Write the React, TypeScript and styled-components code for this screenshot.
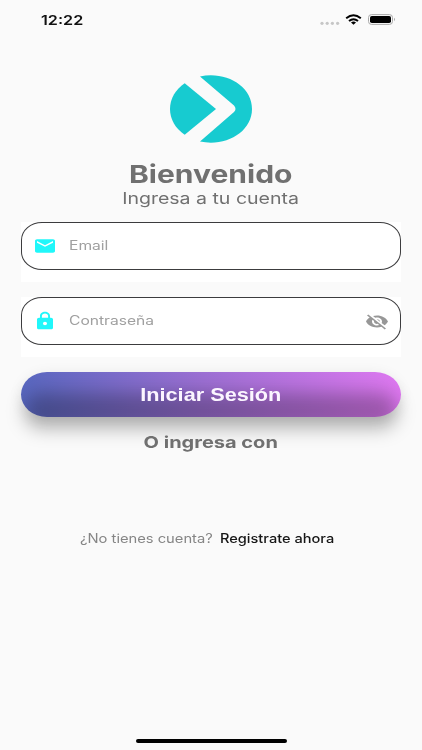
import React from "react";
import styled, { createGlobalStyle } from "styled-components";

const GlobalStyle = createGlobalStyle`
  * { box-sizing: border-box; }
  body { margin: 0; background: #fafafa; font-family: Inter, "Liberation Sans", sans-serif; }
`;

const Screen = styled.main`
  width: 422px;
  height: 750px;
  display: flex;
  flex-direction: column;
  align-items: center;
  overflow: hidden;
  background: #fafafa;
`;

const StatusBar = styled.header`
  width: 100%;
  height: 40px;
  padding: 0 26px 0 41px;
  display: flex;
  align-items: center;
  justify-content: space-between;
`;

const StatusIcons = styled.div`
  display: flex;
  align-items: center;
`;

/* Wide lettering: a normal face stretched sideways. */
const Wide = styled.span<{ $size: number; $weight?: number; $color: string; $stretch: number; $origin?: string }>`
  display: block;
  white-space: nowrap;
  font-size: ${(p) => p.$size}px;
  font-weight: ${(p) => p.$weight ?? 400};
  line-height: 1.25;
  color: ${(p) => p.$color};
  transform: scaleX(${(p) => p.$stretch});
  transform-origin: ${(p) => p.$origin ?? "center"};
`;

const Logo = styled.svg`
  display: block;
  width: 82px;
  height: 68px;
  margin-top: 35px;
`;

const Heading = styled.div`
  height: 79px;
  padding-top: 16px;
  display: flex;
  flex-direction: column;
  align-items: center;
  & > :last-child { margin-top: -1px; }
`;

const Form = styled.form`
  width: 380px;
  display: flex;
  flex-direction: column;
  gap: 15px;
`;

const Field = styled.div`
  height: 60px;
  background: #fff;
`;

const FieldBox = styled.label`
  height: 48px;
  padding: 0 11px 0 11px;
  display: flex;
  align-items: center;
  border: 1.4px solid #3c3c3e;
  border-radius: 21px / 18px;
`;

const FieldIcon = styled.svg<{ $width?: number; $height?: number }>`
  display: block;
  width: ${(p) => p.$width ?? 24}px;
  height: ${(p) => p.$height ?? 20}px;
  flex: none;
`;

const Placeholder = styled.div`
  flex: 1;
  margin-left: 12px;
  padding-bottom: 1px;
`;

const Submit = styled.button`
  position: relative;
  width: 380px;
  height: 45px;
  margin: 15px 0 0;
  padding: 0;
  display: flex;
  align-items: center;
  justify-content: center;
  border: 0;
  border-radius: 26px / 22.5px;
  background: linear-gradient(90deg, #5867bf 0%, #9c6fd3 48%, #de78f0 100%);
  box-shadow: 0 2px 14px rgba(0, 0, 0, 0.08);
  &::before {
    content: "";
    position: absolute;
    inset: 21px 3px -12px;
    border-radius: 22px;
    background: rgba(0, 0, 0, 0.27);
    filter: blur(9px);
  }
  & > span { position: relative; }
`;

const Alternative = styled.div`
  margin-top: 15px;
`;

const SignUp = styled.p`
  width: 255px;
  margin: 79px 8px 0 0;
  display: flex;
  justify-content: space-between;
`;

const HomeIndicator = styled.div`
  width: 151px;
  height: 4px;
  margin-top: auto;
  margin-bottom: 7px;
  border-radius: 3px;
  background: #000;
`;

function BrandLogo() {
  return (
    <Logo viewBox="0 0 82 68" fill="#17cbd0">
      <path d="M14.7 8.2 L46 34 L14.7 59.8 C5.5 53.5 0 44.5 0 34 C0 23.5 5.5 14.5 14.7 8.2Z" />
      <path d="M30 1.5 C56 -4 82 11 82 34 C82 57 56 72 30 66.5 L64 37 Q67 34 64 30.6Z" />
    </Logo>
  );
}

export default function App() {
  return (
    <>
      <GlobalStyle />
      <Screen>
        <StatusBar>
          <Wide $size={13.6} $weight={600} $color="#111" $stretch={1.19} $origin="left">12:22</Wide>
          <StatusIcons>
            <svg width="76" height="16" viewBox="0 0 76 16">
              <g fill="#c6c6c6">
                <circle cx="2" cy="11.3" r="1.6" />
                <circle cx="7.2" cy="11.3" r="1.6" />
                <circle cx="12.4" cy="11.3" r="1.6" />
                <circle cx="17.6" cy="11.3" r="1.6" />
              </g>
              <g fill="none" stroke="#000" strokeWidth="2">
                <path d="M26.2 6.2 Q33.5 0.4 40.8 6.2" />
                <path d="M29 9 Q33.5 5.4 38 9" />
              </g>
              <path d="M31 10.4 Q33.5 8.6 36 10.4 L33.5 12.8Z" />
              <rect x="48.5" y="2.6" width="24" height="9.8" rx="3" fill="#fafafa" stroke="#a9a9a9" />
              <rect x="50" y="4" width="21" height="7" rx="1.8" />
              <path d="M74 5.8 Q76 7.5 74 9.2Z" fill="#a9a9a9" />
            </svg>
          </StatusIcons>
        </StatusBar>

        <BrandLogo />
        <Heading>
          <Wide $size={24.5} $weight={700} $color="#707070" $stretch={1.225}>Bienvenido</Wide>
          <Wide $size={15.8} $color="#707070" $stretch={1.235}>Ingresa a tu cuenta</Wide>
        </Heading>

        <Form onSubmit={(e) => e.preventDefault()}>
          <Field>
            <FieldBox>
              <FieldIcon viewBox="0 0 24 24" preserveAspectRatio="none" fill="#20f7fa">
                <path d="M20 4H4c-1.1 0-1.99.9-1.99 2L2 18c0 1.1.9 2 2 2h16c1.1 0 2-.9 2-2V6c0-1.1-.9-2-2-2zm0 4l-8 5-8-5V6l8 5 8-5v2z" />
              </FieldIcon>
              <Placeholder>
                <Wide $size={12.8} $color="#a0a0a0" $stretch={1.22} $origin="left">Email</Wide>
              </Placeholder>
            </FieldBox>
          </Field>
          <Field>
            <FieldBox>
              <FieldIcon viewBox="0 0 24 24" preserveAspectRatio="none" fill="#20f7fa">
                <path d="M18 8h-1V6c0-2.76-2.24-5-5-5S7 3.24 7 6v2H6c-1.1 0-2 .9-2 2v10c0 1.1.9 2 2 2h12c1.1 0 2-.9 2-2V10c0-1.1-.9-2-2-2zm-6 9c-1.1 0-2-.9-2-2s.9-2 2-2 2 .9 2 2-.9 2-2 2zm3.1-9H8.9V6c0-1.71 1.39-3.1 3.1-3.1 1.71 0 3.1 1.39 3.1 3.1v2z" />
              </FieldIcon>
              <Placeholder>
                <Wide $size={12.8} $color="#a0a0a0" $stretch={1.22} $origin="left">Contraseña</Wide>
              </Placeholder>
              <FieldIcon $height={19} viewBox="0 0 24 24" preserveAspectRatio="none" fill="#979797">
                <path d="M12 7c2.76 0 5 2.24 5 5 0 .65-.13 1.26-.36 1.83l2.92 2.92c1.51-1.26 2.7-2.89 3.43-4.75-1.73-4.39-6-7.5-11-7.5-1.4 0-2.74.25-3.98.7l2.16 2.16C10.74 7.13 11.35 7 12 7zM2 4.27l2.28 2.28.46.46C3.08 8.3 1.78 10.02 1 12c1.73 4.39 6 7.5 11 7.5 1.55 0 3.03-.3 4.38-.84l.42.42L19.73 22 21 20.73 3.27 3 2 4.27zM7.53 9.8l1.55 1.55c-.05.21-.08.43-.08.65 0 1.66 1.34 3 3 3 .22 0 .44-.03.65-.08l1.55 1.55c-.67.33-1.41.53-2.2.53-2.76 0-5-2.24-5-5 0-.79.2-1.53.53-2.2zm4.31-.78l3.15 3.15.02-.16c0-1.66-1.34-3-3-3l-.17.01z" />
              </FieldIcon>
            </FieldBox>
          </Field>
        </Form>

        <Submit type="button">
          <Wide $size={18.4} $weight={600} $color="#fbf5ff" $stretch={1.18}>Iniciar Sesión</Wide>
        </Submit>

        <Alternative>
          <Wide $size={16} $weight={700} $color="#707070" $stretch={1.25}>O ingresa con</Wide>
        </Alternative>

        <SignUp>
          <Wide $size={12.8} $color="#858585" $stretch={1.15} $origin="left">¿No tienes cuenta?</Wide>
          <Wide $size={12.8} $weight={500} $color="#161616" $stretch={1.14} $origin="right">Registrate ahora</Wide>
        </SignUp>

        <HomeIndicator />
      </Screen>
    </>
  );
}
